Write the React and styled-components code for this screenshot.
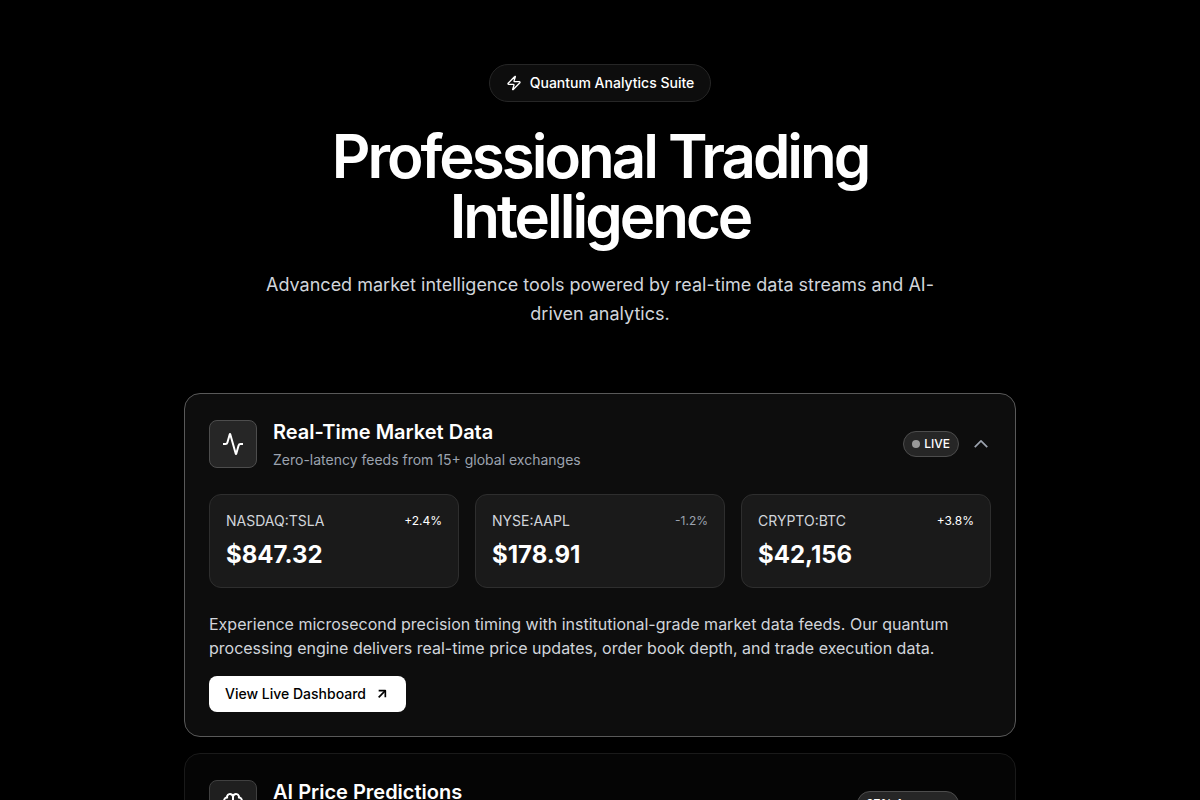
import React, { useState } from "react";
import styled, { createGlobalStyle } from "styled-components";
import { Activity, ArrowUpRight, Brain, Zap } from "lucide-react";

const GlobalStyle = createGlobalStyle`
  *, *::before, *::after { box-sizing: border-box; }
  body {
    margin: 0;
    background: #000;
    color: #fff;
    font-family: Inter, "Liberation Sans", sans-serif;
    font-size: 16px;
    line-height: 24px;
  }
  html { scrollbar-width: none; }
  h1, h2, p { margin: 0; }
  button { font: inherit; color: inherit; }
`;

const Page = styled.main`
  max-width: 896px;
  margin: 0 auto;
  padding: 64px 32px;
`;

const Hero = styled.header`
  display: flex;
  flex-direction: column;
  align-items: center;
  gap: 24px;
  margin-bottom: 65px;
  text-align: center;
`;

const SuiteTag = styled.div`
  display: flex;
  align-items: center;
  gap: 8px;
  padding: 8px 16px;
  border: 1px solid #262626;
  border-radius: 999px;
  background: #0d0d0d;
  font-size: 14px;
  font-weight: 500;
  line-height: 20px;
`;

const Title = styled.h1`
  max-width: 768px;
  font-size: 60px;
  font-weight: 600;
  line-height: 60px;
  letter-spacing: -3px;
`;

const Lead = styled.p`
  max-width: 672px;
  color: #d1d5db;
  font-size: 18px;
  line-height: 29px;
`;

const CardList = styled.div`
  display: flex;
  flex-direction: column;
  gap: 16px;
`;

const Card = styled.section`
  padding: 24px;
  border: 1px solid ${(p) => (p.$open ? "#595959" : "#1a1a1a")};
  border-radius: 16px;
  background: ${(p) => (p.$open ? "#0d0d0d" : "#050505")};
`;

const CardToggle = styled.button`
  display: flex;
  align-items: center;
  gap: 16px;
  width: 100%;
  padding: 0;
  border: 0;
  background: none;
  text-align: left;
  cursor: pointer;
`;

const IconTile = styled.span`
  display: flex;
  align-items: center;
  justify-content: center;
  width: 48px;
  height: 48px;
  border: 1px solid ${(p) => (p.$open ? "#4d4d4d" : "#404040")};
  border-radius: 8px;
  background: ${(p) => (p.$open ? "#262626" : "#1f1f1f")};
`;

const Heading = styled.span`
  display: flex;
  flex: 1;
  flex-direction: column;
  gap: 4px;
`;

const CardTitle = styled.span`
  font-size: 20px;
  font-weight: 600;
  line-height: 28px;
`;

const CardSubtitle = styled.span`
  color: #9ca3af;
  font-size: 14px;
  line-height: 20px;
`;

const Status = styled.span`
  display: flex;
  align-items: center;
  gap: 12px;
  color: #9ca3af;
`;

const StatusBadge = styled.span`
  display: flex;
  align-items: center;
  gap: 4px;
  padding: 4px 8px;
  border: 1px solid #4d4d4d;
  border-radius: 999px;
  background: #262626;
  color: #fff;
  font-size: 12px;
  font-weight: 500;
  line-height: 16px;
`;

const Dot = styled.span`
  width: 8px;
  height: 8px;
  border-radius: 50%;
  background: #999;
`;

const ChevronIcon = styled.svg`
  width: 20px;
  height: 20px;
  fill: none;
  stroke: currentColor;
  stroke-width: 2;
  stroke-linejoin: round;
`;

const Details = styled.div`
  padding-top: 24px;
`;

const QuoteGrid = styled.div`
  display: grid;
  grid-template-columns: repeat(3, 1fr);
  gap: 16px;
  margin-bottom: 24px;
`;

const Quote = styled.div`
  padding: 16px;
  border: 1px solid #2e2e2e;
  border-radius: 12px;
  background: #1a1a1a;
`;

const QuoteTop = styled.div`
  display: flex;
  align-items: center;
  justify-content: space-between;
  margin-bottom: 8px;
`;

const Symbol = styled.span`
  color: #d1d5db;
  font-size: 14px;
  line-height: 20px;
`;

const Change = styled.span`
  color: ${(p) => (p.$down ? "#9ca3af" : "#fff")};
  font-size: 12px;
  line-height: 16px;
`;

const Price = styled.div`
  font-size: 24px;
  font-weight: 700;
  line-height: 32px;
`;

const Description = styled.p`
  margin-bottom: 16px;
  color: #d1d5db;
`;

const ActionButton = styled.button`
  display: inline-flex;
  align-items: center;
  gap: 8px;
  padding: 8px 16px;
  border: 0;
  border-radius: 8px;
  background: #fff;
  color: #000;
  font-size: 14px;
  font-weight: 500;
  line-height: 20px;
  vertical-align: top;
  cursor: pointer;
`;

const features = [
  {
    id: "market",
    Icon: Activity,
    title: "Real-Time Market Data",
    subtitle: "Zero-latency feeds from 15+ global exchanges",
    badge: "LIVE",
    live: true,
    quotes: [
      { symbol: "NASDAQ:TSLA", change: "+2.4%", price: "$847.32" },
      { symbol: "NYSE:AAPL", change: "-1.2%", price: "$178.91" },
      { symbol: "CRYPTO:BTC", change: "+3.8%", price: "$42,156" },
    ],
    description:
      "Experience microsecond precision timing with institutional-grade market data feeds. Our quantum processing engine delivers real-time price updates, order book depth, and trade execution data.",
    action: "View Live Dashboard",
  },
  {
    id: "predictions",
    Icon: Brain,
    title: "AI Price Predictions",
    subtitle: "Machine learning models for market forecasting",
    badge: "97% Accuracy",
  },
];

function FeatureCard({ feature, open, onToggle }) {
  const { Icon } = feature;
  return (
    <Card $open={open}>
      <CardToggle type="button" aria-expanded={open} onClick={onToggle}>
        <IconTile $open={open}>
          <Icon size={24} strokeLinecap="butt" />
        </IconTile>
        <Heading>
          <CardTitle>{feature.title}</CardTitle>
          <CardSubtitle>{feature.subtitle}</CardSubtitle>
        </Heading>
        <Status>
          <StatusBadge>
            {feature.live && <Dot />}
            {feature.badge}
          </StatusBadge>
          <ChevronIcon viewBox="0 0 24 24" aria-hidden="true">
            <path d={open ? "m4.5 15.75 7.5-7.5 7.5 7.5" : "m19.5 8.25-7.5 7.5-7.5-7.5"} />
          </ChevronIcon>
        </Status>
      </CardToggle>
      {open && feature.quotes && (
        <Details>
          <QuoteGrid>
            {feature.quotes.map((q) => (
              <Quote key={q.symbol}>
                <QuoteTop>
                  <Symbol>{q.symbol}</Symbol>
                  <Change $down={q.change.startsWith("-")}>{q.change}</Change>
                </QuoteTop>
                <Price>{q.price}</Price>
              </Quote>
            ))}
          </QuoteGrid>
          <Description>{feature.description}</Description>
          <ActionButton type="button">
            {feature.action}
            <ArrowUpRight size={16} strokeWidth={2.5} strokeLinecap="butt" />
          </ActionButton>
        </Details>
      )}
    </Card>
  );
}

export default function App() {
  const [openId, setOpenId] = useState("market");
  return (
    <>
      <GlobalStyle />
      <Page>
        <Hero>
          <SuiteTag>
            <Zap size={16} />
            Quantum Analytics Suite
          </SuiteTag>
          <Title>Professional Trading Intelligence</Title>
          <Lead>
            Advanced market intelligence tools powered by real-time data streams and AI-driven
            analytics.
          </Lead>
        </Hero>
        <CardList>
          {features.map((feature) => (
            <FeatureCard
              key={feature.id}
              feature={feature}
              open={openId === feature.id}
              onToggle={() => setOpenId(openId === feature.id ? null : feature.id)}
            />
          ))}
        </CardList>
      </Page>
    </>
  );
}
